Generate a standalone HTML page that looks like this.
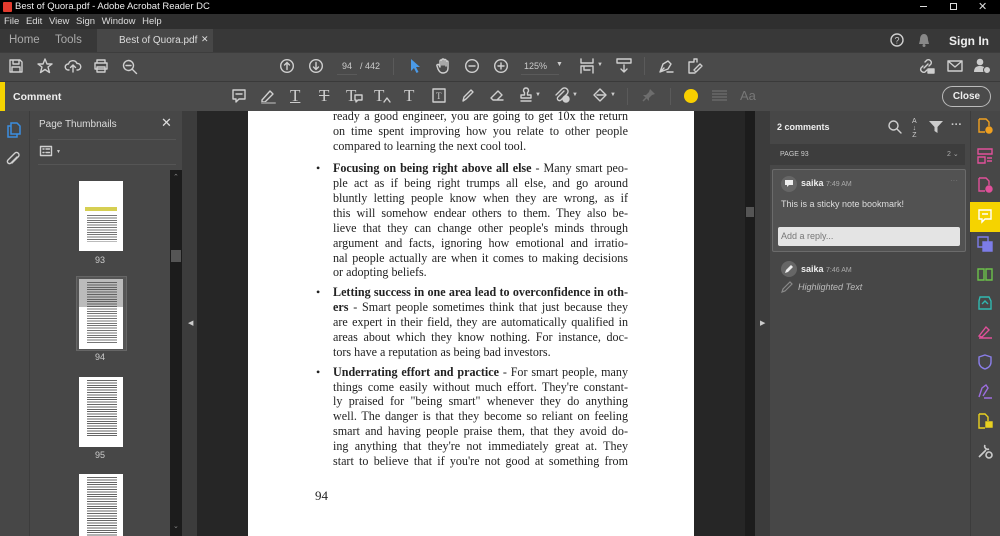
<!DOCTYPE html>
<html><head><meta charset="utf-8">
<style>
*{margin:0;padding:0;box-sizing:border-box}
body{width:1000px;height:536px;overflow:hidden;background:#262626;font-family:"Liberation Sans",sans-serif;position:relative;color:#ddd}
.a{position:absolute}
svg{position:absolute;overflow:visible}
.ic{fill:none;stroke:#cfcfcf;stroke-width:1.4;stroke-linecap:round;stroke-linejoin:round}
.pg{font-family:"Liberation Serif",serif;font-size:12.1px;color:#222;}
.ln{position:absolute;left:333px;width:295px;text-align:justify;text-align-last:justify;white-space:nowrap;height:15px;line-height:15px;overflow:hidden}
.ln.l{text-align-last:left}
.bul{position:absolute;left:316px;font-size:12px;line-height:15px}
</style></head><body>
<!-- title bar -->
<div class="a" style="left:0;top:0;width:1000px;height:14px;background:#000"></div>
<div class="a" style="left:3px;top:2px;width:9px;height:10px;background:#e23b2e;border-radius:1px"></div>
<div class="a" style="left:15px;top:1px;font-size:9.5px;color:#eee">Best of Quora.pdf - Adobe Acrobat Reader DC</div>
<div class="a" style="left:920px;top:6px;width:7px;height:1px;background:#ddd"></div>
<div class="a" style="left:950px;top:3px;width:7px;height:7px;border:1px solid #ddd"></div>
<div class="a" style="left:978px;top:0px;font-size:11px;color:#ddd">✕</div>
<!-- menu -->
<div class="a" style="left:0;top:14px;width:1000px;height:15px;background:#2f2f2f"></div>
<div class="a" style="left:4px;top:16px;font-size:9.5px;color:#ddd;word-spacing:4px">File Edit View Sign Window Help</div>
<!-- tabs -->
<div class="a" style="left:0;top:29px;width:1000px;height:23px;background:#383838"></div>
<div class="a" style="left:97px;top:29px;width:116px;height:23px;background:#474747"></div>
<div class="a" style="left:9px;top:34px;font-size:11.5px;color:#aaa">Home</div>
<div class="a" style="left:55px;top:34px;font-size:11.5px;color:#aaa">Tools</div>
<div class="a" style="left:119px;top:35px;font-size:10px;color:#ddd">Best of Quora.pdf</div>
<div class="a" style="left:201px;top:34px;font-size:9px;color:#ddd">✕</div>
<svg style="left:890px;top:33px" width="14" height="14" class="ic"><circle cx="7" cy="7" r="6"/><text x="4.5" y="10.5" font-size="9" fill="#ccc" stroke="none">?</text></svg>
<svg style="left:918px;top:33px" width="12" height="14"><path d="M6 1C3 1 2 4 2 7L1 11H11L10 7C10 4 9 1 6 1Z" fill="#888"/><circle cx="6" cy="12.5" r="1.5" fill="#888"/></svg>
<div class="a" style="left:949px;top:34px;font-size:12px;color:#eee;font-weight:bold">Sign In</div>
<!-- toolbar -->
<div class="a" style="left:0;top:52px;width:1000px;height:29px;background:#4a4a4a;border-top:1px solid #3d3d3d"></div>
<svg style="left:9px;top:59px" width="14" height="14" class="ic"><path d="M1 1H11L13 3V13H1Z M4 1V5H10V1 M3 13V8H11V13"/></svg>
<svg style="left:37px;top:58px" width="16" height="16" class="ic"><path d="M8 1L10 6H15L11 9L12.5 14.5L8 11.5L3.5 14.5L5 9L1 6H6Z"/></svg>
<svg style="left:65px;top:59px" width="16" height="14" class="ic"><path d="M4 11H3A3 3 0 0 1 3.5 5A4.5 4.5 0 0 1 12 4.5A3 3 0 0 1 13 11H12 M8 13V6 M5.5 8.5L8 6L10.5 8.5"/></svg>
<svg style="left:93px;top:59px" width="16" height="14" class="ic"><path d="M4 4V1H12V4 M2 4H14V10H2Z M4 8H12V13H4Z"/></svg>
<svg style="left:122px;top:59px" width="16" height="16" class="ic"><circle cx="6.5" cy="6.5" r="5"/><path d="M10 10L14.5 14.5 M4 6.5H9"/></svg>
<svg style="left:280px;top:59px" width="14" height="14" class="ic"><circle cx="7" cy="7" r="6.3"/><path d="M7 10.5V3.5 M4.5 6L7 3.5L9.5 6"/></svg>
<svg style="left:309px;top:59px" width="14" height="14" class="ic"><circle cx="7" cy="7" r="6.3"/><path d="M7 3.5V10.5 M4.5 8L7 10.5L9.5 8"/></svg>
<div class="a" style="left:337px;top:58px;width:20px;height:17px;border-bottom:1px solid #5a5a5a;font-size:9px;color:#ccc;text-align:center;line-height:16px">94</div>
<div class="a" style="left:360px;top:61px;font-size:9px;color:#ccc">/ 442</div>
<div class="a" style="left:393px;top:58px;width:1px;height:17px;background:#5a5a5a"></div>
<svg style="left:410px;top:58px" width="12" height="16"><path d="M1 1L1 13L4 10L6.5 15L8.5 14L6 9H10Z" fill="#4a9ae8"/></svg>
<svg style="left:436px;top:58px" width="14" height="16" class="ic"><path d="M4 8V3a1 1 0 0 1 2 0V7 M6 7V2a1 1 0 0 1 2 0V7 M8 7V2.5a1 1 0 0 1 2 0V8 M10 8V4a1 1 0 0 1 2 0V10C12 13 10 15 7 15S3 13 2 11L1 8a1 1 0 0 1 2-1L4 9"/></svg>
<svg style="left:465px;top:59px" width="14" height="14" class="ic"><circle cx="7" cy="7" r="6.3"/><path d="M4 7H10"/></svg>
<svg style="left:494px;top:59px" width="14" height="14" class="ic"><circle cx="7" cy="7" r="6.3"/><path d="M4 7H10 M7 4V10"/></svg>
<div class="a" style="left:524px;top:61px;font-size:9px;color:#ccc">125%</div>
<div class="a" style="left:521px;top:74px;width:38px;height:1px;background:#5a5a5a"></div>
<div class="a" style="left:556px;top:61px;font-size:7px;color:#ccc">▼</div>
<svg style="left:580px;top:58px" width="14" height="16" class="ic"><path d="M1 1V5H13V1 M1 15V8H13V15 M4 8V12H10"/></svg>
<div class="a" style="left:597px;top:62px;font-size:6px;color:#ccc">▼</div>
<svg style="left:616px;top:58px" width="16" height="16" class="ic"><path d="M1 1H15V5H1Z M8 7V14 M5 11L8 14L11 11"/></svg>
<div class="a" style="left:644px;top:57px;width:1px;height:18px;background:#5a5a5a"></div>
<svg style="left:658px;top:58px" width="16" height="16" class="ic"><path d="M2 14L5 6L10 3L13 6L10 11Z M2 14L6 10 M9 14H15"/></svg>
<svg style="left:686px;top:58px" width="18" height="16" class="ic"><path d="M3 4H8V1H11V4 M3 4V15H9 M10 14L16 8L14 6L8 12Z"/></svg>
<svg style="left:918px;top:58px" width="16" height="16" class="ic"><path d="M6 10L10 6 M7 4L9 2a3 3 0 0 1 4 4L11 8 M9 12L7 14a3 3 0 0 1-4-4L5 8"/><path d="M10 11H16V15H10Z" fill="#cfcfcf"/></svg>
<svg style="left:947px;top:60px" width="16" height="12" class="ic"><path d="M1 1H15V11H1Z M1 1L8 7L15 1"/></svg>
<svg style="left:974px;top:58px" width="18" height="16"><circle cx="6" cy="4" r="3.3" fill="#ccc"/><path d="M0 14C0 9 3 8 6 8S12 9 12 14Z" fill="#ccc"/><circle cx="13" cy="12" r="3.5" fill="#ccc" stroke="#4a4a4a"/></svg>
<!-- comment bar -->
<div class="a" style="left:0;top:81px;width:1000px;height:30px;background:#4b4b4b;border-top:1px solid #3a3a3a"></div>
<div class="a" style="left:0;top:82px;width:5px;height:29px;background:#f5d300"></div>
<div class="a" style="left:13px;top:91px;font-size:10.5px;color:#eee;font-weight:bold">Comment</div>
<svg style="left:232px;top:89px" width="14" height="14" class="ic"><path d="M1 1H13V10H7L4 13V10H1Z M4 5H10"/></svg>
<svg style="left:260px;top:89px" width="16" height="15" class="ic"><path d="M2 11L10 2L13 5L5 13L2 13Z"/><path d="M2 14H15" stroke="#888" stroke-width="2"/></svg>
<div class="a" style="left:290px;top:86px;font-family:'Liberation Serif',serif;font-size:17px;color:#ccc;text-decoration:underline">T</div>
<div class="a" style="left:319px;top:86px;font-family:'Liberation Serif',serif;font-size:17px;color:#ccc;text-decoration:line-through">T</div>
<div class="a" style="left:346px;top:86px;font-family:'Liberation Serif',serif;font-size:17px;color:#ccc">T</div>
<svg style="left:354px;top:94px" width="9" height="9" class="ic"><path d="M1 1H8V6H4L2 8V6H1Z"/></svg>
<div class="a" style="left:374px;top:86px;font-family:'Liberation Serif',serif;font-size:17px;color:#ccc">T</div>
<svg style="left:383px;top:97px" width="8" height="6" class="ic"><path d="M1 5L4 1L7 5"/></svg>
<div class="a" style="left:404px;top:86px;font-family:'Liberation Serif',serif;font-size:17px;color:#ccc">T</div>
<svg style="left:432px;top:88px" width="14" height="15" class="ic"><path d="M1 1H13V14H1Z"/><text x="4" y="11" font-size="9" fill="#ccc" stroke="none" font-family="Liberation Serif">T</text></svg>
<svg style="left:461px;top:88px" width="14" height="15" class="ic"><path d="M2 13L3 9L10 2L12 4L5 11Z"/></svg>
<svg style="left:489px;top:88px" width="16" height="15" class="ic"><path d="M2 10L9 3L13 7L8 12H4Z M6 12H14"/></svg>
<svg style="left:518px;top:87px" width="16" height="16" class="ic"><path d="M8 1a2.5 2.5 0 0 1 1.5 4.5V8H13V11H3V8H6.5V5.5A2.5 2.5 0 0 1 8 1Z M3 14H13"/></svg>
<div class="a" style="left:535px;top:92px;font-size:6px;color:#ccc">▼</div>
<svg style="left:554px;top:87px" width="16" height="16" class="ic"><path d="M10 4L4 10a2 2 0 0 0 3 3L13 7a3.5 3.5 0 0 0-5-5L2 8"/><circle cx="12" cy="12" r="3" fill="#ccc"/></svg>
<div class="a" style="left:572px;top:92px;font-size:6px;color:#ccc">▼</div>
<svg style="left:592px;top:87px" width="16" height="16" class="ic"><path d="M8 2L14 8L8 14L2 8Z M5 8H12"/></svg>
<div class="a" style="left:610px;top:92px;font-size:6px;color:#ccc">▼</div>
<div class="a" style="left:627px;top:88px;width:1px;height:17px;background:#5a5a5a"></div>
<svg style="left:642px;top:88px" width="14" height="14"><path d="M8 1L13 6L10 7L7 10L7 13L1 7L4 7L7 4Z" fill="#6d6d6d"/><path d="M4 10L1 13" stroke="#6d6d6d" stroke-width="1.5"/></svg>
<div class="a" style="left:670px;top:88px;width:1px;height:17px;background:#5a5a5a"></div>
<div class="a" style="left:684px;top:89px;width:14px;height:14px;border-radius:50%;background:#f8cf00"></div>
<svg style="left:712px;top:90px" width="15" height="11"><path d="M0 1H15 M0 4H15 M0 7H15 M0 10H15" stroke="#777" stroke-width="1"/></svg>
<div class="a" style="left:740px;top:88px;font-size:13px;color:#777">Aa</div>
<div class="a" style="left:942px;top:86px;width:49px;height:21px;border:1px solid #bbb;border-radius:11px;font-size:10px;color:#eee;font-weight:bold;text-align:center;line-height:19px">Close</div>
<!-- left rail -->
<div class="a" style="left:0;top:111px;width:30px;height:425px;background:#474747;border-right:1px solid #3c3c3c"></div>
<svg style="left:7px;top:122px" width="14" height="16" fill="none" stroke="#3b8ee0" stroke-width="1.5"><path d="M4 4H1V15H10V12 M4 1H10L13 4V12H4Z"/></svg>
<svg style="left:6px;top:151px" width="14" height="16" class="ic"><path d="M11 6L5 12a2 2 0 0 1-3-3L9 2a2.5 2.5 0 0 1 3.5 3.5L6 12"/></svg>
<!-- thumbnail panel -->
<div class="a" style="left:30px;top:111px;width:152px;height:425px;background:#474747"></div>
<div class="a" style="left:39px;top:119px;font-size:10px;color:#ddd">Page Thumbnails</div>
<div class="a" style="left:161px;top:115px;font-size:13px;color:#ddd">✕</div>
<div class="a" style="left:38px;top:139px;width:138px;height:1px;background:#555"></div>
<svg style="left:40px;top:146px" width="12" height="10" class="ic"><path d="M0.5 0.5H11.5V9.5H0.5Z M3 3H4 M3 6.5H4 M6 3H9.5 M6 6.5H9.5"/></svg>
<div class="a" style="left:56px;top:149px;font-size:5px;color:#ccc">▼</div>
<div class="a" style="left:38px;top:164px;width:138px;height:1px;background:#555"></div>
<div class="a" style="left:170px;top:170px;width:12px;height:366px;background:#1c1c1c"></div>
<div class="a" style="left:171px;top:250px;width:10px;height:12px;background:#555"></div>
<div class="a" style="left:173px;top:173px;font-size:7px;color:#888">⌃</div>
<div class="a" style="left:173px;top:522px;font-size:7px;color:#888">⌄</div>
<!-- thumbs -->
<div class="a" style="left:79px;top:181px;width:44px;height:70px;background:#fff"></div>
<div class="a" style="left:85px;top:207px;width:32px;height:4px;background:#d6cf52"></div>
<div class="a" style="left:87px;top:215px;width:30px;height:27px;background:repeating-linear-gradient(#777 0 1px,#fff 1px 2.4px)"></div>
<div class="a" style="left:95px;top:255px;font-size:9px;color:#ccc">93</div>
<div class="a" style="left:76px;top:276px;width:51px;height:75px;border:1px solid #666;background:#555"></div>
<div class="a" style="left:79px;top:279px;width:44px;height:70px;background:#fff"></div>
<div class="a" style="left:79px;top:279px;width:44px;height:28px;background:#bbb"></div>
<div class="a" style="left:87px;top:282px;width:30px;height:62px;background:repeating-linear-gradient(rgba(60,60,60,.7) 0 1px,transparent 1px 2.4px)"></div>
<div class="a" style="left:95px;top:352px;font-size:9px;color:#ccc">94</div>
<div class="a" style="left:79px;top:377px;width:44px;height:70px;background:#fff"></div>
<div class="a" style="left:87px;top:380px;width:30px;height:57px;background:repeating-linear-gradient(#666 0 1px,#fff 1px 2.4px)"></div>
<div class="a" style="left:95px;top:450px;font-size:9px;color:#ccc">95</div>
<div class="a" style="left:79px;top:474px;width:44px;height:62px;background:#fff"></div>
<div class="a" style="left:87px;top:477px;width:30px;height:59px;background:repeating-linear-gradient(#666 0 1px,#fff 1px 2.4px)"></div>
<!-- dividers -->
<div class="a" style="left:182px;top:111px;width:15px;height:425px;background:#3c3c3c"></div>
<div class="a" style="left:188px;top:319px;font-size:7px;color:#ccc">◀</div>
<div class="a" style="left:745px;top:111px;width:10px;height:425px;background:#1c1c1c"></div>
<div class="a" style="left:746px;top:207px;width:8px;height:10px;background:#555"></div>
<div class="a" style="left:755px;top:111px;width:15px;height:425px;background:#3c3c3c"></div>
<div class="a" style="left:760px;top:319px;font-size:7px;color:#ccc">▶</div>
<!-- page -->
<div class="a" style="left:248px;top:111px;width:446px;height:425px;background:#fff"></div>
<div class="pg">
<div class="ln" style="top:109px">ready a good engineer, you are going to get 10x the return</div>
<div class="ln" style="top:124px">on time spent improving how you relate to other people</div>
<div class="ln l" style="top:139px">compared to learning the next cool tool.</div>
<div class="bul" style="top:161px">•</div>
<div class="ln" style="top:161px"><b>Focusing on being right above all else</b> - Many smart peo-</div>
<div class="ln" style="top:176px">ple act as if being right trumps all else, and go around</div>
<div class="ln" style="top:191px">bluntly letting people know when they are wrong, as if</div>
<div class="ln" style="top:206px">this will somehow endear others to them. They also be-</div>
<div class="ln" style="top:221px">lieve that they can change other people's minds through</div>
<div class="ln" style="top:236px">argument and facts, ignoring how emotional and irratio-</div>
<div class="ln" style="top:251px">nal people actually are when it comes to making decisions</div>
<div class="ln l" style="top:265px">or adopting beliefs.</div>
<div class="bul" style="top:285px">•</div>
<div class="ln" style="top:285px"><b>Letting success in one area lead to overconfidence in oth-</b></div>
<div class="ln" style="top:300px"><b>ers</b> - Smart people sometimes think that just because they</div>
<div class="ln" style="top:315px">are expert in their field, they are automatically qualified in</div>
<div class="ln" style="top:330px">areas about which they know nothing. For instance, doc-</div>
<div class="ln l" style="top:345px">tors have a reputation as being bad investors.</div>
<div class="bul" style="top:365px">•</div>
<div class="ln" style="top:365px"><b>Underrating effort and practice</b> - For smart people, many</div>
<div class="ln" style="top:380px">things come easily without much effort. They're constant-</div>
<div class="ln" style="top:394px">ly praised for "being smart" whenever they do anything</div>
<div class="ln" style="top:409px">well. The danger is that they become so reliant on feeling</div>
<div class="ln" style="top:424px">smart and having people praise them, that they avoid do-</div>
<div class="ln" style="top:439px">ing anything that they're not immediately great at. They</div>
<div class="ln" style="top:454px">start to believe that if you're not good at something from</div>
<div class="a" style="left:315px;top:488px;font-size:13px">94</div>
</div>
<!-- comments pane -->
<div class="a" style="left:770px;top:111px;width:200px;height:425px;background:#474747"></div>
<div class="a" style="left:777px;top:122px;font-size:9px;color:#eee;font-weight:bold">2 comments</div>
<svg style="left:888px;top:120px" width="14" height="14" class="ic"><circle cx="5.5" cy="5.5" r="4.5"/><path d="M9 9L13 13"/></svg>
<div class="a" style="left:912px;top:118px;font-size:7px;color:#ccc;line-height:7px;text-align:center">A<br>↓<br>Z</div>
<svg style="left:929px;top:121px" width="14" height="12"><path d="M0 0H14L8.5 6V12L5.5 10V6Z" fill="#ccc"/></svg>
<div class="a" style="left:951px;top:119px;font-size:11px;color:#ccc;font-weight:bold">···</div>
<div class="a" style="left:770px;top:144px;width:195px;height:21px;background:#3d3d3d"></div>
<div class="a" style="left:780px;top:151px;font-size:7px;color:#ccc">PAGE 93</div>
<div class="a" style="left:947px;top:150px;font-size:7px;color:#aaa">2 ⌄</div>
<div class="a" style="left:772px;top:169px;width:194px;height:83px;background:#525252;border:1px solid #6b6b6b;border-radius:2px"></div>
<div class="a" style="left:781px;top:176px;width:16px;height:16px;border-radius:50%;background:#666"></div>
<svg style="left:785px;top:180px" width="8" height="8"><path d="M0 0H8V5H4L2 7V5H0Z" fill="#eee"/></svg>
<div class="a" style="left:801px;top:178px;font-size:9px;color:#eee;font-weight:bold">saika <span style="font-weight:normal;font-size:7px;color:#aaa">7:49 AM</span></div>
<div class="a" style="left:950px;top:176px;font-size:8px;color:#777">···</div>
<div class="a" style="left:781px;top:199px;font-size:9px;color:#ddd">This is a sticky note bookmark!</div>
<div class="a" style="left:778px;top:227px;width:182px;height:19px;background:#e4e4e4;border-radius:2px;font-size:9px;color:#777;padding:4px 3px">Add a reply...</div>
<div class="a" style="left:781px;top:261px;width:16px;height:16px;border-radius:50%;background:#666"></div>
<svg style="left:784px;top:264px" width="10" height="10"><path d="M1 9L2 6L7 1L9 3L4 8Z" fill="#eee"/></svg>
<div class="a" style="left:801px;top:264px;font-size:9px;color:#eee;font-weight:bold">saika <span style="font-weight:normal;font-size:7px;color:#aaa">7:46 AM</span></div>
<svg style="left:781px;top:281px" width="12" height="12" fill="none" stroke="#888" stroke-width="1.2"><path d="M1 11L2 8L9 1L11 3L4 10Z"/></svg>
<div class="a" style="left:798px;top:282px;font-size:9px;color:#bbb;font-style:italic">Highlighted Text</div>
<!-- right rail -->
<div class="a" style="left:970px;top:111px;width:30px;height:425px;background:#474747;border-left:1px solid #3c3c3c"></div>
<div class="a" style="left:970px;top:202px;width:30px;height:30px;background:#f5d300"></div>
<svg style="left:977px;top:118px" width="16" height="16" fill="none" stroke="#f0a020" stroke-width="1.4"><path d="M2 1H9L12 4V8 M2 1V14H8"/><circle cx="12" cy="12" r="3" fill="#f0a020"/></svg>
<svg style="left:977px;top:148px" width="16" height="16" fill="none" stroke="#e0509a" stroke-width="1.4"><path d="M1 1H15V6H1Z M1 9H8V15H1Z M10 10H15 M10 13H15"/></svg>
<svg style="left:977px;top:177px" width="16" height="16" fill="none" stroke="#e0509a" stroke-width="1.4"><path d="M2 1H9L12 4V8 M2 1V14H8"/><circle cx="12" cy="12" r="3" fill="#e0509a"/></svg>
<svg style="left:978px;top:209px" width="14" height="14" fill="none" stroke="#fff" stroke-width="1.4"><path d="M1 1H13V10H7L4 13V10H1Z M4 5H10"/></svg>
<svg style="left:977px;top:236px" width="16" height="16" fill="none" stroke="#7d7de8" stroke-width="1.4"><path d="M1 1H11V11H1Z"/><path d="M6 6H15V15H6Z" fill="#7d7de8"/></svg>
<svg style="left:977px;top:266px" width="16" height="16" fill="none" stroke="#6cc04a" stroke-width="1.4"><path d="M1 3H7V14H1Z M9 3H15V14H9Z"/></svg>
<svg style="left:977px;top:295px" width="16" height="16" fill="none" stroke="#30b8b0" stroke-width="1.4"><path d="M3 2H12L14 6V14H2V6Z M5 9L8 6L11 9"/></svg>
<svg style="left:977px;top:324px" width="16" height="16" fill="none" stroke="#e0509a" stroke-width="1.4"><path d="M2 12L9 3L12 6L5 13Z M2 14H15"/></svg>
<svg style="left:978px;top:354px" width="14" height="16" fill="none" stroke="#8a7ee8" stroke-width="1.4"><path d="M7 1L13 3V8C13 12 10 14 7 15C4 14 1 12 1 8V3Z"/></svg>
<svg style="left:977px;top:384px" width="16" height="16" fill="none" stroke="#9d6ee0" stroke-width="1.4"><path d="M2 13L5 4L9 1L11 4L6 12 M7 14H15"/></svg>
<svg style="left:977px;top:413px" width="16" height="16" fill="none" stroke="#e8d020" stroke-width="1.4"><path d="M2 1H8L11 4V8 M2 1V15H8"/><path d="M9 9H15V14H9Z" fill="#e8d020"/></svg>
<svg style="left:977px;top:443px" width="16" height="16" fill="none" stroke="#ccc" stroke-width="1.6"><path d="M2 14L9 7 M8 2a3 3 0 0 0 4 4"/><circle cx="12" cy="12" r="3"/></svg>
</body></html>
